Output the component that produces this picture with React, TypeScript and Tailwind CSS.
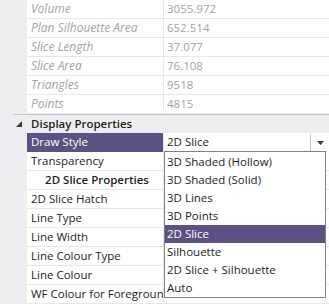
import React from "react";

const font = { fontFamily: '"Open Sans", "Noto Sans", sans-serif' };

function ReadRow({ label, value }: { label: string; value: string }) {
  return (
    <div className="flex h-[19px]">
      <div className="w-[27px] shrink-0 bg-[#eeeef2]" />
      <div className="w-[136px] shrink-0 border-b border-[#e6e6eb] bg-white pl-[4px] text-[12px] italic leading-[18px] text-[#a3a3a3] whitespace-nowrap overflow-hidden">
        {label}
      </div>
      <div className="w-px shrink-0 bg-[#e6e6eb]" />
      <div className="flex-1 border-b border-[#e6e6eb] bg-white pl-[3px] text-[11.5px] leading-[18px] text-[#a3a3a3] whitespace-nowrap overflow-hidden">
        {value}
      </div>
    </div>
  );
}

function Row({ label, bold, center }: { label: string; bold?: boolean; center?: boolean }) {
  return (
    <div className="flex h-[19px]">
      <div className="w-[27px] shrink-0 bg-[#eeeef2]" />
      <div
        className={
          "w-[136px] shrink-0 border-b border-[#e6e6eb] bg-white pl-[4px] text-[11.5px] leading-[18px] text-[#1e1e1e] whitespace-nowrap overflow-hidden " +
          (bold ? "font-semibold " : "") +
          (center ? "text-center pl-0" : "")
        }
      >
        {label}
      </div>
      <div className="w-px shrink-0 bg-[#e6e6eb]" />
      <div className="flex-1 border-b border-[#e6e6eb] bg-white" />
    </div>
  );
}

const options = [
  "3D Shaded (Hollow)",
  "3D Shaded (Solid)",
  "3D Lines",
  "3D Points",
  "2D Slice",
  "Silhouette",
  "2D Slice + Silhouette",
  "Auto",
];

export default function App() {
  return (
    <div className="relative h-[305px] w-[329px] overflow-hidden bg-white" style={font}>
      <div className="flex flex-col">
        <ReadRow label="Volume" value="3055.972" />
        <ReadRow label="Plan Silhouette Area" value="652.514" />
        <ReadRow label="Slice Length" value="37.077" />
        <ReadRow label="Slice Area" value="76.108" />
        <ReadRow label="Triangles" value="9518" />
        <ReadRow label="Points" value="4815" />
        {/* Category header */}
        <div className="flex h-[19px] bg-[#eeeef2]">
          <div className="w-[13px] shrink-0" />
          <div className="flex flex-1 flex-col">
            <div className="h-px bg-[#c4c4d2]" />
            <div className="flex h-[18px] items-center">
              <svg width="14" height="18" viewBox="0 0 14 18" className="shrink-0">
                <path d="M9 6 L9 12 L3 12 Z" fill="#3c3c3c" />
              </svg>
              <span className="pl-[4px] text-[11.5px] font-semibold leading-[18px] text-[#1e1e1e]">
                Display Properties
              </span>
            </div>
          </div>
        </div>
        {/* Draw Style selected */}
        <div className="flex h-[19px]">
          <div className="w-[27px] shrink-0 bg-[#eeeef2]" />
          <div className="w-[136px] shrink-0 bg-[#5c5182] pl-[4px] text-[11.5px] leading-[18px] text-white whitespace-nowrap">
            Draw Style
          </div>
          <div className="w-px shrink-0 bg-[#e6e6eb]" />
          <div className="flex flex-1 bg-white">
            <div className="flex-1 pl-[3px] text-[11.5px] leading-[18px] text-[#1e1e1e]">2D Slice</div>
            <div className="w-px self-stretch my-[1px] bg-[#c4c4d2]" />
            <div className="flex w-[18px] items-center justify-center">
              <svg width="7" height="4" viewBox="0 0 7 4">
                <path d="M0 0 L7 0 L3.5 4 Z" fill="#3c3c3c" />
              </svg>
            </div>
          </div>
        </div>
        <Row label="Transparency" />
        <Row label="2D Slice Properties" bold center />
        <Row label="2D Slice Hatch" />
        <Row label="Line Type" />
        <Row label="Line Width" />
        <Row label="Line Colour Type" />
        <Row label="Line Colour" />
        <Row label="WF Colour for Foreground" />
      </div>

      {/* Dropdown list */}
      <div className="absolute left-[164px] top-[151px] w-[162px] border border-[#828282] bg-white pt-px">
        {options.map((o) => (
          <div
            key={o}
            className={
              "h-[18px] pl-[2px] text-[11.5px] leading-[18px] whitespace-nowrap " +
              (o === "2D Slice" ? "bg-[#5c5182] text-white" : "text-[#1e1e1e]")
            }
          >
            {o}
          </div>
        ))}
      </div>
    </div>
  );
}
